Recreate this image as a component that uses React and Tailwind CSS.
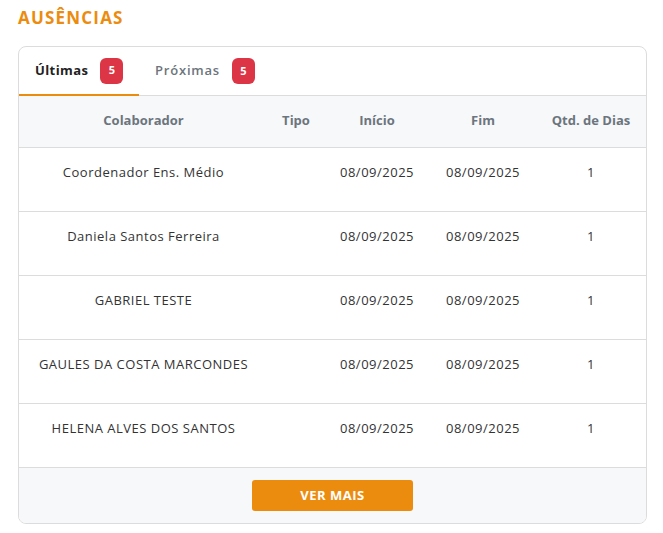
export default function App() {
  const rows = [
    "Coordenador Ens. Médio",
    "Daniela Santos Ferreira",
    "GABRIEL TESTE",
    "GAULES DA COSTA MARCONDES",
    "HELENA ALVES DOS SANTOS",
  ];
  const grid = "grid grid-cols-[249px_56px_106px_106px_1fr]";
  return (
    <div className="bg-white w-[663px] h-[533px] pt-[7px] px-[18px]" style={{ fontFamily: '"Open Sans", sans-serif' }}>
      <h1 className="text-[17px] font-bold text-[#ec8c0f] leading-[22px] tracking-[1.2px]">AUSÊNCIAS</h1>
      <div className="mt-[17px] w-[629px] border border-[#dcdcdc] rounded-[8px] overflow-hidden">
        <div className="flex h-[49px] border-b border-[#dcdcdc]">
          <div className="w-[120px] flex items-center pl-[16px] border-b-2 border-[#ec8c0f] -mb-px">
            <span className="text-[13px] font-bold text-[#222] tracking-[0.4px]">Últimas</span>
            <span className="ml-[12px] w-[23px] h-[26px] rounded-[6px] bg-[#dc3545] text-white text-[11px] font-bold flex items-center justify-center">5</span>
          </div>
          <div className="flex items-center pl-[16px]">
            <span className="text-[13px] font-semibold text-[#6c757d] tracking-[0.8px]">Próximas</span>
            <span className="ml-[12px] w-[23px] h-[26px] rounded-[6px] bg-[#dc3545] text-white text-[11px] font-bold flex items-center justify-center">5</span>
          </div>
        </div>
        <div className={`${grid} h-[52px] bg-[#f7f8fa] border-b border-[#dcdcdc] items-center text-[13px] font-bold text-[#6c757d] text-center pb-[2px]`}>
          <div>Colaborador</div>
          <div>Tipo</div>
          <div>Início</div>
          <div>Fim</div>
          <div>Qtd. de Dias</div>
        </div>
        {rows.map((name) => (
          <div key={name} className={`${grid} h-[64px] border-b border-[#dcdcdc] text-[13px] text-[#333] text-center pt-[15px] tracking-[0.5px]`}>
            <div>{name}</div>
            <div></div>
            <div>08/09/2025</div>
            <div>08/09/2025</div>
            <div>1</div>
          </div>
        ))}
        <div className="h-[55px] bg-[#f7f8fa] flex items-center justify-center">
          <button className="w-[161px] h-[31px] rounded-[3px] bg-[#ec8c0f] text-white text-[13px] font-bold tracking-[0.5px]">VER MAIS</button>
        </div>
      </div>
    </div>
  );
}
